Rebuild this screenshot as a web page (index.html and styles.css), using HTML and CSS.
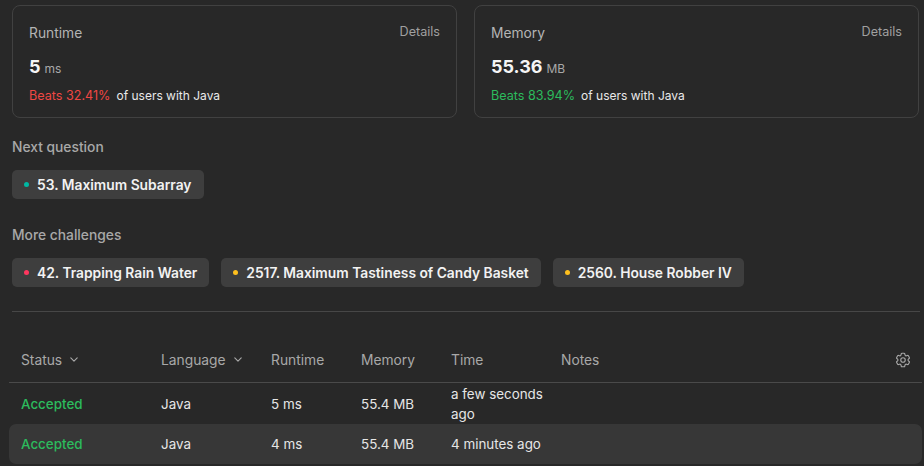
FILE: index.html
```html
<!DOCTYPE html>
<html>
<head>
<meta charset="utf-8">
<link rel="stylesheet" href="styles.css">
</head>
<body>
<div class="page">
  <div class="cards">
    <div class="card">
      <div class="card-head"><span class="label">Runtime</span><span class="details">Details</span></div>
      <div class="value"><span class="num">5</span><span class="unit">ms</span></div>
      <div class="beats"><span class="pct red">Beats 32.41%</span><span class="of">of users with Java</span></div>
    </div>
    <div class="card">
      <div class="card-head"><span class="label">Memory</span><span class="details">Details</span></div>
      <div class="value"><span class="num">55.36</span><span class="unit">MB</span></div>
      <div class="beats"><span class="pct green">Beats 83.94%</span><span class="of">of users with Java</span></div>
    </div>
  </div>

  <div class="section-title first">Next question</div>
  <div class="chips">
    <div class="chip"><span class="dot teal"></span>53. Maximum Subarray</div>
  </div>

  <div class="section-title">More challenges</div>
  <div class="chips">
    <div class="chip"><span class="dot red-dot"></span>42. Trapping Rain Water</div>
    <div class="chip"><span class="dot yellow"></span>2517. Maximum Tastiness of Candy Basket</div>
    <div class="chip"><span class="dot yellow"></span>2560. House Robber IV</div>
  </div>

  <div class="divider"></div>

  <div class="table">
    <div class="thead">
      <div class="cell">Status <svg class="chev" viewBox="0 0 10 6" width="8" height="5"><path d="M1 1l4 4 4-4" fill="none" stroke="currentColor" stroke-width="1.4" stroke-linecap="round" stroke-linejoin="round"/></svg></div>
      <div class="cell">Language <svg class="chev" viewBox="0 0 10 6" width="8" height="5"><path d="M1 1l4 4 4-4" fill="none" stroke="currentColor" stroke-width="1.4" stroke-linecap="round" stroke-linejoin="round"/></svg></div>
      <div class="cell">Runtime</div>
      <div class="cell">Memory</div>
      <div class="cell">Time</div>
      <div class="cell notes">Notes
        <svg class="gear" viewBox="0 0 24 24" width="18" height="18" fill="none" stroke="currentColor" stroke-width="1.5" stroke-linecap="round" stroke-linejoin="round"><path d="M9.594 3.94c.09-.542.56-.94 1.11-.94h2.593c.55 0 1.02.398 1.11.94l.213 1.281c.063.374.313.686.645.87.074.04.147.083.22.127.325.196.72.257 1.075.124l1.217-.456a1.125 1.125 0 0 1 1.37.49l1.296 2.247a1.125 1.125 0 0 1-.26 1.431l-1.003.827c-.293.241-.438.613-.43.992a7.723 7.723 0 0 1 0 .255c-.008.378.137.75.43.991l1.004.827c.424.35.534.955.26 1.43l-1.298 2.247a1.125 1.125 0 0 1-1.369.491l-1.217-.456c-.355-.133-.75-.072-1.076.124a6.470 6.470 0 0 1-.22.128c-.331.183-.581.495-.644.869l-.213 1.281c-.09.543-.56.94-1.110.94h-2.594c-.55 0-1.019-.398-1.110-.94l-.213-1.281c-.062-.374-.312-.686-.644-.87a6.520 6.520 0 0 1-.22-.127c-.325-.196-.72-.257-1.076-.124l-1.217.456a1.125 1.125 0 0 1-1.369-.49l-1.297-2.247a1.125 1.125 0 0 1 .26-1.431l1.004-.827c.292-.24.437-.613.43-.991a6.932 6.932 0 0 1 0-.255c.007-.38-.138-.751-.43-.992l-1.004-.827a1.125 1.125 0 0 1-.26-1.430l1.297-2.247a1.125 1.125 0 0 1 1.37-.491l1.216.456c.356.133.751.072 1.076-.124.072-.044.146-.086.22-.128.332-.183.582-.495.644-.869l.214-1.280Z"/><path d="M15 12a3 3 0 1 1-6 0 3 3 0 0 1 6 0Z"/></svg>
      </div>
    </div>
    <div class="row">
      <div class="cell accepted">Accepted</div>
      <div class="cell">Java</div>
      <div class="cell">5 ms</div>
      <div class="cell">55.4 MB</div>
      <div class="cell time">a few seconds ago</div>
      <div class="cell"></div>
    </div>
    <div class="row alt">
      <div class="cell accepted">Accepted</div>
      <div class="cell">Java</div>
      <div class="cell">4 ms</div>
      <div class="cell">55.4 MB</div>
      <div class="cell time">4 minutes ago</div>
      <div class="cell"></div>
    </div>
  </div>
</div>
</body>
</html>
```

FILE: styles.css
```css
html, body {
  margin: 0;
  padding: 0;
  background: #282828;
}
body {
  font-family: Inter, "Noto Sans", sans-serif;
  color: #eff1f6;
  font-size: 13px;
}
.page {
  padding: 5px 5px 0 12px;
  display: flex;
  flex-direction: column;
}
.cards {
  display: flex;
  gap: 17px;
}
.card {
  flex: 1;
  height: 113px;
  box-sizing: border-box;
  border: 1px solid #414141;
  border-radius: 8px;
  padding: 18px 16px 0 16px;
  display: flex;
  flex-direction: column;
}
.card-head {
  display: flex;
  justify-content: space-between;
  align-items: flex-start;
  line-height: 20px;
}
.label {
  color: #b4b4b4;
  font-size: 13.8px;
  margin-top: -1px;
}
.details {
  color: #a0a0a0;
  font-size: 12.6px;
  margin-top: -2px;
}
.value {
  margin-top: 12px;
  display: flex;
  align-items: baseline;
  gap: 4px;
  line-height: 24px;
}
.num {
  font-size: 18px;
  font-weight: 700;
  color: #f5f5f5;
}
.unit {
  font-size: 12px;
  color: #a8a8a8;
}
.beats {
  margin-top: 6px;
  font-size: 12px;
  line-height: 18px;
  display: flex;
  gap: 6px;
}
.pct { font-size: 12.6px; }
.pct.red { color: #ef4743; }
.pct.green { color: #2cbb5d; }
.of { color: #eaeaea; }

.section-title {
  color: #a8a8a8;
  font-size: 13.8px;
  font-weight: 500;
  line-height: 20px;
  margin-top: 26px;
}
.section-title.first {
  margin-top: 19px;
}
.chips {
  display: flex;
  gap: 12px;
  margin-top: 13px;
}
.chip {
  display: flex;
  align-items: center;
  height: 29px;
  box-sizing: border-box;
  padding: 0 12px 0 12px;
  background: #3e3e3e;
  border-radius: 5px;
  font-size: 13.8px;
  font-weight: 600;
  color: #f2f2f2;
}
.dot {
  width: 5px;
  height: 5px;
  border-radius: 50%;
  margin: 0 8px 0 0;
  flex: none;
}
.dot.teal { background: #00b8a3; }
.dot.red-dot { background: #ff375f; }
.dot.yellow { background: #ffc01e; }

.divider {
  height: 1px;
  background: #474747;
  margin-top: 24px;
  margin-right: -1px;
}

.table {
  margin-top: 25px;
  margin-left: -3px;
  margin-right: -3px;
  font-size: 13.4px;
}
.thead, .row {
  display: grid;
  grid-template-columns: 140px 110px 90px 90px 110px 1fr;
}
.thead {
  height: 45px;
  align-items: center;
  border-bottom: 1px solid #4a4a4a;
  color: #a8a8a8;
  font-size: 13.8px;
}
.cell {
  padding-left: 12px;
  display: flex;
  align-items: center;
}
.chev {
  margin-left: 8px;
  color: #a8a8a8;
}
.notes {
  justify-content: space-between;
  padding-right: 10px;
}
.gear { color: #a8a8a8; }
.row {
  min-height: 40px;
  line-height: 20px;
  color: #e6e6e6;
}
.row:first-of-type { }
.thead + .row {
  padding-top: 1px;
}
.row.alt {
  background: #373737;
  border-radius: 7px;
}
.accepted {
  color: #2cbb5d;
  font-weight: 500;
}
.time {
  padding-right: 0;
}
```
